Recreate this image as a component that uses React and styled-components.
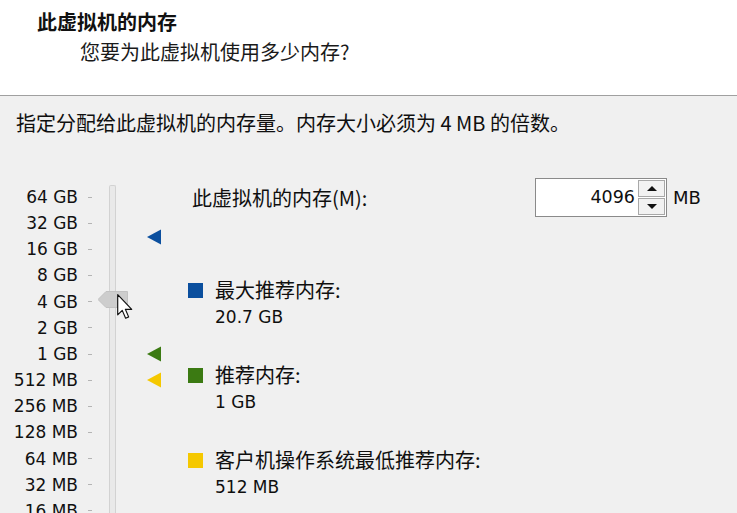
import React from "react";
import styled, { createGlobalStyle } from "styled-components";

const Global = createGlobalStyle`
  html, body { margin: 0; padding: 0; }
  body {
    width: 737px; height: 513px; overflow: hidden;
    background: #f0f0f0;
    font-family: "Noto Sans CJK SC", "Liberation Sans", sans-serif;
    color: #0f0f0f;
  }
`;

const LATIN = `"DejaVu Sans", "Liberation Sans", sans-serif`;

const Page = styled.div`
  width: 737px; height: 513px; overflow: hidden;
  display: flex; flex-direction: column;
`;

const Header = styled.header`
  flex-shrink: 0;
  height: 96px; background: #ffffff;
  border-bottom: 1px solid #a0a0a0;
  display: flex; flex-direction: column;
  padding-top: 8px; box-sizing: border-box;
`;

const Title = styled.div`
  font-size: 20px; font-weight: 700; line-height: 28px;
  padding-left: 37px; color: #111;
`;

const Subtitle = styled.div`
  font-size: 20px; line-height: 28px; margin-top: 2px;
  padding-left: 80px; color: #1a1a1a;
`;

const Body = styled.div`
  flex: 1; min-height: 0; display: flex; flex-direction: column;
  padding: 0 0 0 16px;
`;

const Instruction = styled.div`
  font-size: 20px; line-height: 26px; margin-top: 14px;
`;

const Main = styled.div`
  display: flex; align-items: flex-start;
  margin-top: 42px; flex: 1;
`;

const Scale = styled.div`
  display: flex; margin-left: -16px; padding-top: 6px;
  height: 400px;
`;

const ROW = 26.17;

const Labels = styled.div`
  width: 78px; display: grid; grid-auto-rows: ${ROW}px;
`;

const Label = styled.div`
  font-family: ${LATIN};
  font-size: 17px; line-height: ${ROW}px; text-align: right; white-space: nowrap;
  color: #111;
`;

const Ticks = styled.div`
  margin-left: 10px; width: 5px; display: grid; grid-auto-rows: ${ROW}px;
`;

const Tick = styled.div`
  display: flex; align-items: center;
  &::before { content: ""; width: 4px; height: 1px; background: #b4b4b4; }
`;

const TrackCol = styled.div`
  position: relative; margin-left: 16px; width: 7px;
`;

const Groove = styled.div`
  margin-top: 1px; height: 100%;
  border: 1px solid #d2d2d2; border-bottom: none;
  background: #e9e9e9; box-sizing: border-box;
  border-radius: 2px 2px 0 0;
`;

const Thumb = styled.svg`
  position: absolute; left: -11px;
`;

const Cursor = styled.svg`
  position: absolute; left: 8px;
`;

const MarkerCol = styled.div`
  position: relative; margin-left: 31px; width: 15px;
`;

const Marker = styled.svg`
  position: absolute; left: 0;
`;

const Info = styled.div`
  margin-left: 26px; display: flex; flex-direction: column;
`;

const MemRow = styled.div`
  display: flex; align-items: center; height: 39px;
`;

const MemLabel = styled.div`
  font-size: 20px; width: 347px; padding-left: 4px; box-sizing: border-box;
  line-height: 26px;
`;

const Spin = styled.div`
  display: flex; width: 132px; height: 39px; box-sizing: border-box;
  border: 1px solid #8a8a8a; background: #fff;
`;

const SpinValue = styled.div`
  flex: 1; font-family: ${LATIN}; font-size: 17.5px; line-height: 37px; text-align: right;
  padding-right: 3px;
`;

const SpinButtons = styled.div`
  display: flex; flex-direction: column; width: 28px;
  padding: 1px 1px 1px 0; gap: 1px; box-sizing: border-box;
`;

const SpinBtn = styled.div`
  flex: 1; border: 1px solid #a8a8a8; background: #f2f2f2;
  display: flex; align-items: center; justify-content: center;
  &::before {
    content: ""; width: 0; height: 0;
    border-left: 5px solid transparent; border-right: 5px solid transparent;
    ${(p) => (p.$down ? "border-top: 5px solid #111;" : "border-bottom: 5px solid #111;")}
  }
`;

const Unit = styled.div`
  font-family: ${LATIN}; font-size: 18px; margin-left: 6px; line-height: 26px;
`;

const Legend = styled.div`
  display: flex; flex-direction: column; gap: 32px; margin-top: 60px;
`;

const Entry = styled.div`
  display: grid; grid-template-columns: 15px auto; column-gap: 12px;
`;

const Swatch = styled.div`
  width: 15px; height: 15px; margin-top: 6px; background: ${(p) => p.$color};
`;

const EntryText = styled.div`
  font-size: 20px; line-height: 26.5px; white-space: nowrap;
`;

const EntryValue = styled.div`
  font-family: ${LATIN}; font-size: 17px; line-height: 26.5px; white-space: nowrap;
`;

const labels = ["64 GB", "32 GB", "16 GB", "8 GB", "4 GB", "2 GB", "1 GB", "512 MB", "256 MB", "128 MB", "64 MB", "32 MB", "16 MB"];

const BLUE = "#0b4f9e";
const GREEN = "#3b7a12";
const YELLOW = "#f5c800";

// position (center y within scale) for a value in MB on the log scale
const posFor = (mb) => Math.log2(65536 / mb) * ROW + ROW / 2;

const markers = [
  { mb: 22 * 1024, color: BLUE },
  { mb: 1024, color: GREEN },
  { mb: 512, color: YELLOW },
];

const legend = [
  { color: BLUE, title: "最大推荐内存:", value: "20.7 GB" },
  { color: GREEN, title: "推荐内存:", value: "1 GB" },
  { color: YELLOW, title: "客户机操作系统最低推荐内存:", value: "512 MB" },
];

export default function App() {
  const thumbY = posFor(4096) - 2;
  return (
    <Page>
      <Global />
      <Header>
        <Title>此虚拟机的内存</Title>
        <Subtitle>您要为此虚拟机使用多少内存?</Subtitle>
      </Header>
      <Body>
        <Instruction>指定分配给此虚拟机的内存量。内存大小必须为 4 MB 的倍数。</Instruction>
        <Main>
          <Scale>
            <Labels>
              {labels.map((l) => <Label key={l}>{l}</Label>)}
            </Labels>
            <Ticks>
              {labels.map((l) => <Tick key={l} />)}
            </Ticks>
            <TrackCol>
              <Groove />
              <Thumb width="30" height="17" viewBox="0 0 30 17" style={{ top: thumbY - 9 }}>
                <path d="M0 8.5 L8 0.5 H29.5 V16.5 H8 Z" fill="#cdcdcd" stroke="#c2c2c2" />
              </Thumb>
              <Cursor width="17" height="26" viewBox="0 0 13 20" style={{ top: thumbY - 6 }}>
                <path d="M0.5 0.5 V16 L4 12.6 L6.6 18.6 L8.9 17.6 L6.4 11.8 H11.3 Z" fill="#fff" stroke="#111" strokeWidth="0.9" strokeLinejoin="round" />
              </Cursor>
            </TrackCol>
            <MarkerCol>
              {markers.map((m) => (
                <Marker key={m.mb} width="15" height="16" viewBox="0 0 15 16" style={{ top: posFor(m.mb) - 8 }}>
                  <path d="M0 8 L14 0.5 V15.5 Z" fill={m.color} />
                </Marker>
              ))}
            </MarkerCol>
          </Scale>
          <Info>
            <MemRow>
              <MemLabel>此虚拟机的内存(M):</MemLabel>
              <Spin>
                <SpinValue>4096</SpinValue>
                <SpinButtons>
                  <SpinBtn />
                  <SpinBtn $down />
                </SpinButtons>
              </Spin>
              <Unit>MB</Unit>
            </MemRow>
            <Legend>
              {legend.map((e) => (
                <Entry key={e.title}>
                  <Swatch $color={e.color} />
                  <EntryText>{e.title}</EntryText>
                  <span />
                  <EntryValue>{e.value}</EntryValue>
                </Entry>
              ))}
            </Legend>
          </Info>
        </Main>
      </Body>
    </Page>
  );
}
